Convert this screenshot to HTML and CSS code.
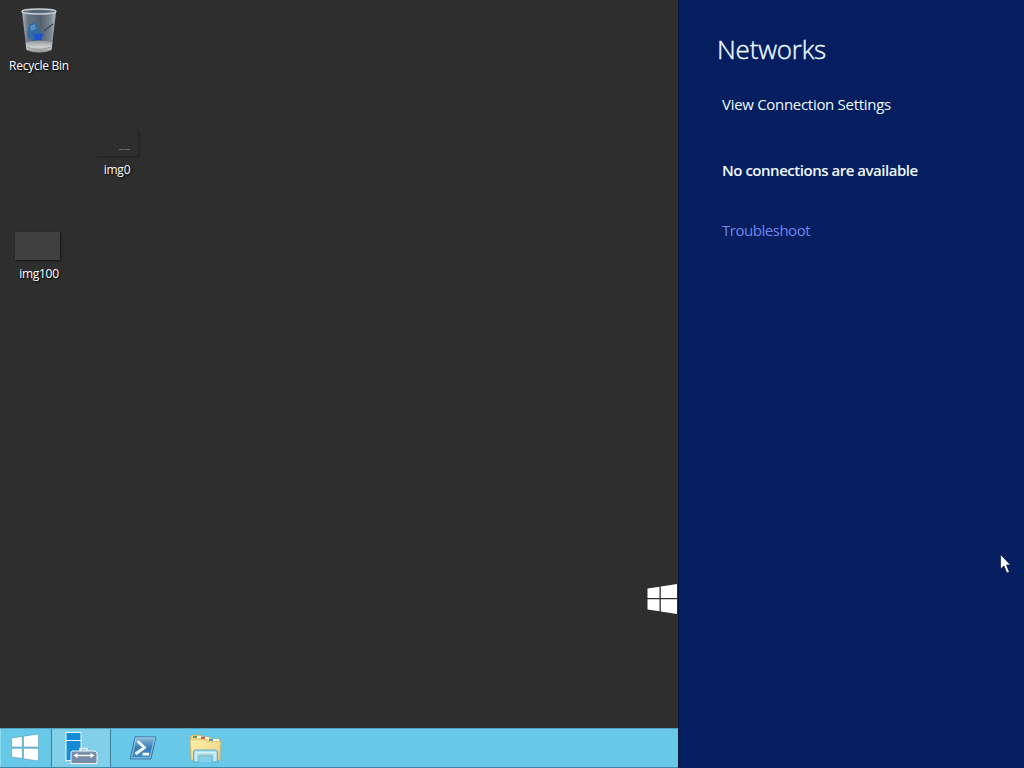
FILE: index.html
```html
<!DOCTYPE html>
<html lang="en">
<head>
<meta charset="utf-8">
<title>Networks</title>
<link rel="stylesheet" href="styles.css">
</head>
<body>
<div class="screen">
  <main class="workspace">
    <section class="desktop">
      <div class="shortcut bin">
        <svg class="bin-art" width="46" height="52" viewBox="0 0 46 52">
          <defs>
            <linearGradient id="glass" x1="0" x2="1"><stop offset="0" stop-color="#a9b4bd"/><stop offset=".18" stop-color="#66737f"/><stop offset=".55" stop-color="#536070"/><stop offset=".85" stop-color="#7d8992"/><stop offset="1" stop-color="#b9c0c5"/></linearGradient>
            <linearGradient id="base" x1="0" x2="0" y1="0" y2="1"><stop offset="0" stop-color="#8f969b"/><stop offset=".55" stop-color="#d0d1cf"/><stop offset="1" stop-color="#898b8b"/></linearGradient>
          </defs>
          <path d="M6 6 L10.500 44 Q23 49 35.500 44 L40 6 Z" fill="url(#glass)"/>
          <path d="M9.500 36 Q23 33 36.500 36 L35.500 44 Q23 49 10.500 44 Z" fill="url(#base)"/>
          <path d="M13 19 L18 16 L22 19 L23 26 L28 28 L25 34 L17 35 L11 30 Z" fill="#326ba2"/>
          <path d="M18 28 L27 28 L25 34 L19 34 Z" fill="#1f50d0"/>
          <path d="M14 20 L19 18 L20 23 L15 25 Z" fill="#5690bd"/>
          <path d="M28 25 L37 18" stroke="#3d4b59" stroke-width="1.500"/>
          <path d="M11 41 Q23 46 35 41" fill="none" stroke="#999d9f"/>
          <ellipse cx="23" cy="5.500" rx="17" ry="2.500" fill="#596778" stroke="#c9d0d5" stroke-width="1.300"/>
        </svg>
        <span class="caption">Recycle Bin</span>
      </div>
      <div class="shortcut first-image">
        <span class="thumb faint"><svg width="12" height="4" viewBox="0 0 12 4"><path d="M0 1.500H5M6 1.500H11" stroke="#6a6a6a"/></svg></span>
        <span class="caption">img0</span>
      </div>
      <div class="shortcut second-image">
        <span class="thumb gray"></span>
        <span class="caption wide">img100</span>
      </div>
    </section>
    <nav class="taskbar">
      <span class="task start">
        <svg width="28" height="28" viewBox="0 0 28 28"><path d="M.5 4 11.300 2.500V13H.5ZM12.500 2.200 27.500 0V13H12.500ZM.5 14.300H11.300V24.500L.5 23ZM12.500 14.300H27.500V27L12.500 24.700Z" fill="#fff" stroke="#438ba8" stroke-width=".5"/></svg>
      </span>
      <span class="task active">
        <svg width="34" height="34" viewBox="0 0 34 34">
          <path d="M2 1.500H17V29.500H2Z" fill="#168bd5" stroke="#e8f8ff"/><path d="M2 9.500H17" stroke="#e8f8ff"/>
          <path d="M16 20V17.500H23V20" fill="none" stroke="#e4edf2" stroke-width="1.500"/>
          <path d="M8 20H31L33 22V32.500H7V22Z" fill="#788da7" stroke="#edf5f9"/>
          <path d="M11 24.500H29" stroke="#fff" stroke-width="1.300"/><path d="M13.500 22V27L9.500 24.500ZM26.500 22V27L30.500 24.500Z" fill="#fff"/>
        </svg>
      </span>
      <span class="task shell">
        <svg width="28" height="24" viewBox="0 0 28 24">
          <defs><linearGradient id="shell" x1="0" y1="0" x2="0" y2="1"><stop stop-color="#8cbcdc"/><stop offset=".5" stop-color="#3c7db5"/><stop offset="1" stop-color="#428fc4"/></linearGradient></defs>
          <path d="M6 .8H27L22 23H1Z" fill="url(#shell)" stroke="#4080ad" stroke-linejoin="round"/>
          <path d="M7.200 2H25.500L21 21.800H2.600Z" fill="none" stroke="#9fd0ea" stroke-width=".8"/>
          <path d="M8.500 5 15.500 11.500 6.500 18M13.500 18.200H20" fill="none" stroke="#f4faff" stroke-width="2.800"/>
        </svg>
      </span>
      <span class="task folder">
        <svg width="34" height="31" viewBox="0 0 34 31">
          <defs><linearGradient id="folder" x1="0" x2="1" y2="1"><stop stop-color="#fff0ab"/><stop offset="1" stop-color="#ecd07f"/></linearGradient></defs>
          <path d="M1.500 6V2Q2 1 4 1H11L14 3H20L23 5H31V26H2Z" fill="#f2d589" stroke="#cba757" stroke-width=".7"/>
          <path d="M4 2H8V4H4Z" fill="#46a85a"/><path d="M12 3H16V5H12Z" fill="#d65642"/><path d="M20 5H24V7H20Z" fill="#5295c7"/>
          <path d="M8 2H12V4H8ZM16 3H20V5H16ZM24 5H30V7H24Z" fill="#fff9df"/>
          <path d="M1.500 6H15L19 8H31.500L30.500 26H2.500Z" fill="url(#folder)" stroke="#dcc173" stroke-width=".7"/>
          <path d="M4.500 28V18Q4.500 16 7 16H26Q28.500 16 28.500 18V28H23V22H10V28Z" fill="#a9dced" stroke="#58abcb"/>
          <path d="M10.500 23H22.500V28H10.500Z" fill="#85d0ea"/>
          <path d="M7 27V18.500H26V27" fill="none" stroke="#d8f5ff" stroke-width="1.300"/>
        </svg>
      </span>
    </nav>
    <svg class="edge-logo" width="31" height="31" viewBox="0 0 31 31"><path d="M.5 4.500 12.500 2.700V14H.5ZM13.800 2.500 30 0V14H13.800ZM.5 15.300H12.500V27.300L.5 25.500ZM13.800 15.300H30V30L13.800 27.500Z" fill="#fff"/></svg>
  </main>
  <aside class="networks">
    <h1>Networks</h1>
    <div class="settings">View Connection Settings</div>
    <div class="status">No connections are available</div>
    <div class="help">Troubleshoot</div>
  </aside>
  <svg class="pointer" width="12" height="20" viewBox="0 0 12 20"><path d="M.5 .5V15L4 12 6.800 19 9.400 18 6.500 11H10.500Z" fill="#fff" stroke="#081437" stroke-width=".7"/></svg>
</div>
</body>
</html>
```
FILE: styles.css
```css
* { box-sizing: border-box; }
body { margin: 0; overflow: hidden; font-family: "Open Sans", "Noto Sans", sans-serif; }
.screen { position: relative; display: grid; grid-template-columns: 678px 346px; width: 1024px; height: 768px; }
.workspace { position: relative; display: flex; flex-direction: column; background: #2e2e2e; }
.desktop { flex: 1; display: grid; grid-template-columns: 78px 78px; grid-template-rows: 104px 104px 104px; }
.shortcut { display: flex; flex-direction: column; align-items: center; color: #fff; }
.bin { grid-area: 1 / 1; padding-top: 6px; }
.first-image { grid-area: 2 / 2; padding-top: 27px; }
.second-image { grid-area: 3 / 1; padding-top: 24px; }
.caption { font-size: 12px; line-height: 16px; letter-spacing: -.25px; white-space: nowrap; text-shadow: 1px 1px 2px #000; }
.wide { letter-spacing: -.3px; }
.thumb { display: flex; justify-content: flex-end; align-items: flex-end; width: 46px; box-shadow: 1px 1px 2px #111; }
.faint { width: 43px; height: 25px; margin: 0 2px 6px 0; padding: 0 7px 4px; box-shadow: 1px 1px 2px #202020; }
.gray { width: 45px; height: 28px; margin: 0 3px 6px 0; background: #404040; }
.taskbar { display: flex; height: 40px; background: #68c8e8; border-top: 1px solid #4fa5c0; border-bottom: 1px solid #368aa8; }
.task { display: flex; align-items: center; justify-content: center; }
.start { width: 51px; padding-right: 3px; border-left: 1px solid #8adcf3; }
.active { width: 60px; padding-right: 1px; background: #82cfe9; border: solid #3c8198; border-width: 0 1px; }
.shell { width: 64px; }
.folder { width: 61px; padding-top: 3px; }
.edge-logo { position: absolute; left: 647px; top: 584px; }
.networks { display: flex; flex-direction: column; padding: 29px 44px; background: #041e60; border-left: 1px solid #071639; color: #f0faff; font-size: 15px; line-height: 20px; white-space: nowrap; }
h1 { margin: 0 0 25px -6px; font-size: 26px; font-weight: 300; line-height: 40px; letter-spacing: -.2px; -webkit-text-stroke: .4px #f0faff; }
.settings { margin: 0 0 46px -1px; letter-spacing: -.3px; }
.status { margin: 0 0 40px -1px; font-weight: 600; letter-spacing: -.47px; }
.help { margin-left: -1px; color: #7185ed; letter-spacing: -.47px; }
.pointer { position: absolute; left: 1000px; top: 554px; }
```
